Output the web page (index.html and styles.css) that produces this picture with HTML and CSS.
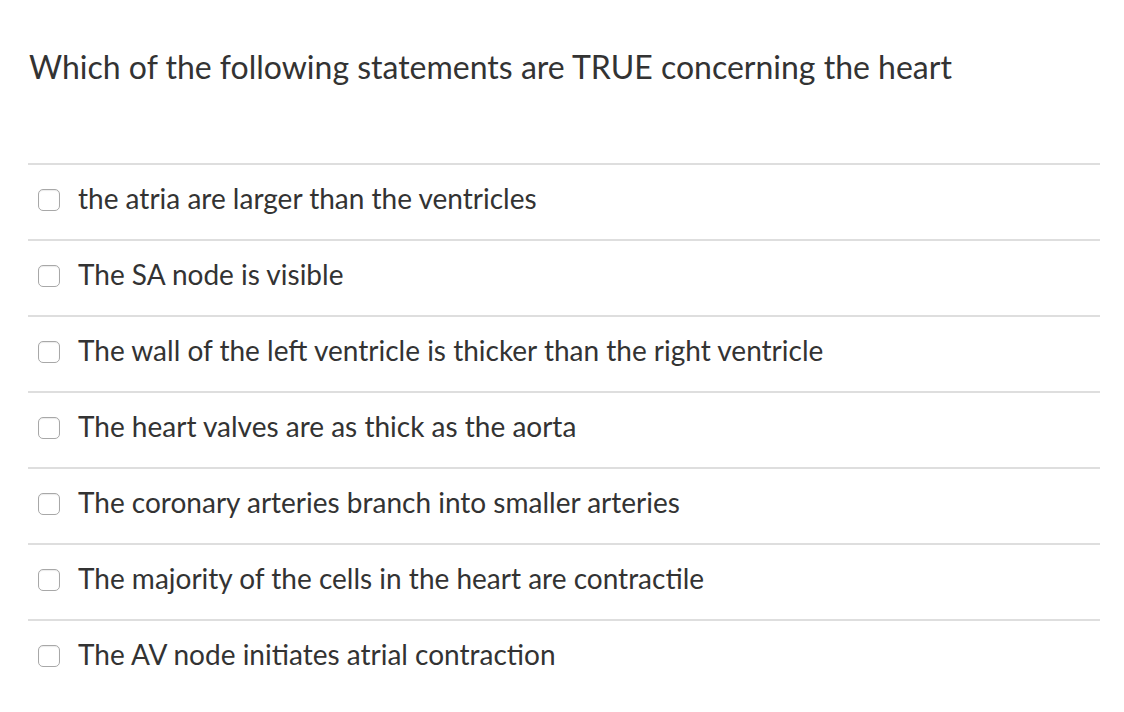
FILE: index.html
```html
<!DOCTYPE html>
<html>
<head>
<meta charset="utf-8">
<link rel="stylesheet" href="styles.css">
</head>
<body>
<div class="question">
  <h1 class="title">Which of the following statements are TRUE concerning the heart</h1>
  <div class="answers">
    <label class="answer"><span class="box"></span><span class="text">the atria are larger than the ventricles</span></label>
    <label class="answer"><span class="box"></span><span class="text">The SA node is visible</span></label>
    <label class="answer"><span class="box"></span><span class="text">The wall of the left ventricle is thicker than the right ventricle</span></label>
    <label class="answer"><span class="box"></span><span class="text">The heart valves are as thick as the aorta</span></label>
    <label class="answer"><span class="box"></span><span class="text">The coronary arteries branch into smaller arteries</span></label>
    <label class="answer"><span class="box"></span><span class="text">The majority of the cells in the heart are contractile</span></label>
    <label class="answer"><span class="box"></span><span class="text">The AV node initiates atrial contraction</span></label>
  </div>
</div>
</body>
</html>
```

FILE: styles.css
```css
html, body {
  margin: 0;
  padding: 0;
  background: #ffffff;
}
body {
  font-family: Lato, "Open Sans", sans-serif;
  color: #333333;
}
.question {
  padding: 48px 24px 0 28px;
}
.title {
  margin: 0;
  font-size: 32px;
  font-weight: 400;
  line-height: 38px;
  padding-left: 1px;
}
.answers {
  margin-top: 77px;
}
.answer {
  display: flex;
  align-items: flex-start;
  height: 76px;
  box-sizing: border-box;
  border-top: 2px solid #dedede;
  padding: 16px 0 0 10px;
}
.box {
  flex: none;
  width: 20px;
  height: 20px;
  border: 1.5px solid #a8a8a8;
  border-radius: 5px;
  background: #fff;
  box-shadow: inset 0 1px 1px rgba(0,0,0,0.08);
  margin-top: 8px;
}
.text {
  margin-left: 18px;
  font-size: 28px;
  line-height: 34px;
}
```
